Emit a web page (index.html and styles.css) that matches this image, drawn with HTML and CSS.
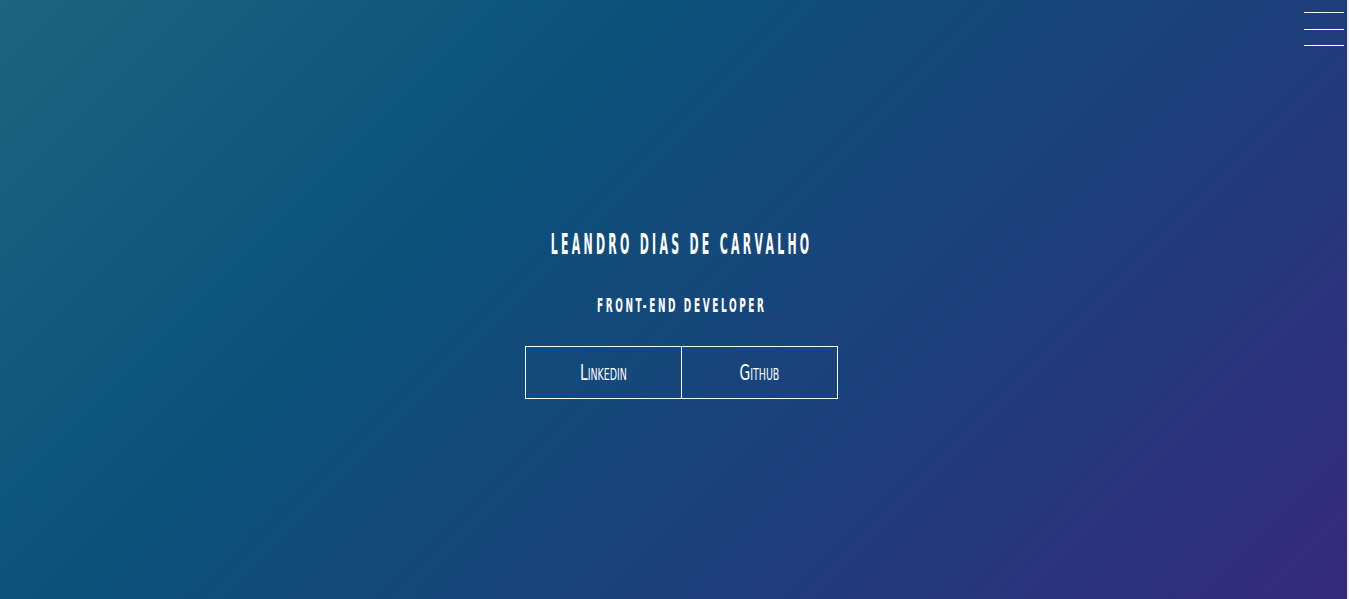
FILE: index.html
```html
<!DOCTYPE html>
<html lang="pt">
<head>
<meta charset="utf-8">
<title>Leandro Dias de Carvalho</title>
<link rel="stylesheet" href="styles.css">
</head>
<body>
<main class="hero">
  <button class="menu" aria-label="Menu">
    <span class="menu-line"></span>
    <span class="menu-line"></span>
    <span class="menu-line"></span>
  </button>
  <div class="intro">
    <h1 class="name"><span class="squeeze">LEANDRO DIAS DE CARVALHO</span></h1>
    <h2 class="role"><span class="squeeze">FRONT-END DEVELOPER</span></h2>
    <nav class="links">
      <a class="link" href="#"><span class="squeeze">Linkedin</span></a>
      <a class="link" href="#"><span class="squeeze">Github</span></a>
    </nav>
  </div>
</main>
</body>
</html>
```
FILE: styles.css
```css
html, body {
  margin: 0;
  padding: 0;
  height: 100%;
  background: #eeeeee;
  overflow: hidden;
}
body {
  font-family: "DejaVu Sans Condensed", "DejaVu Sans", sans-serif;
  font-stretch: condensed;
  color: #ffffff;
}
.hero {
  position: relative;
  width: 1347px;
  height: 599px;
  box-sizing: border-box;
  padding-left: 16px;
  background: linear-gradient(135deg, #1b6580 0%, #0a527a 33%, #1d3f7b 66%, #352a7c 100%);
  display: flex;
  align-items: flex-start;
  justify-content: center;
}
.menu {
  position: absolute;
  top: 12px;
  right: 3px;
  width: 40px;
  height: 34px;
  padding: 0;
  border: 0;
  background: transparent;
  display: flex;
  flex-direction: column;
  justify-content: space-between;
}
.menu-line {
  display: block;
  height: 1px;
  width: 40px;
  background: #ffffff;
}
.intro {
  display: flex;
  flex-direction: column;
  align-items: center;
  margin-top: 227px;
}
.squeeze {
  display: inline-block;
  transform-origin: center;
  white-space: nowrap;
}
.name {
  margin: 0;
  font-size: 29px;
  font-weight: 700;
  line-height: 34px;
  letter-spacing: 7.8px;
}
.name .squeeze {
  transform: scaleX(0.42);
}
.role {
  margin: 32px 0 0;
  font-size: 20px;
  font-weight: 700;
  line-height: 24px;
  letter-spacing: 5.2px;
}
.role .squeeze {
  transform: scaleX(0.5);
}
.links {
  display: flex;
  margin-top: 29px;
}
.link {
  width: 157px;
  height: 53px;
  box-sizing: border-box;
  border: 1px solid #ffffff;
  display: flex;
  align-items: center;
  justify-content: center;
  color: #ffffff;
  text-decoration: none;
  font-size: 22px;
  font-variant: small-caps;
}
.link + .link {
  width: 156px;
  border-left: 0;
}
.link .squeeze {
  transform: scaleX(0.7);
}
```
